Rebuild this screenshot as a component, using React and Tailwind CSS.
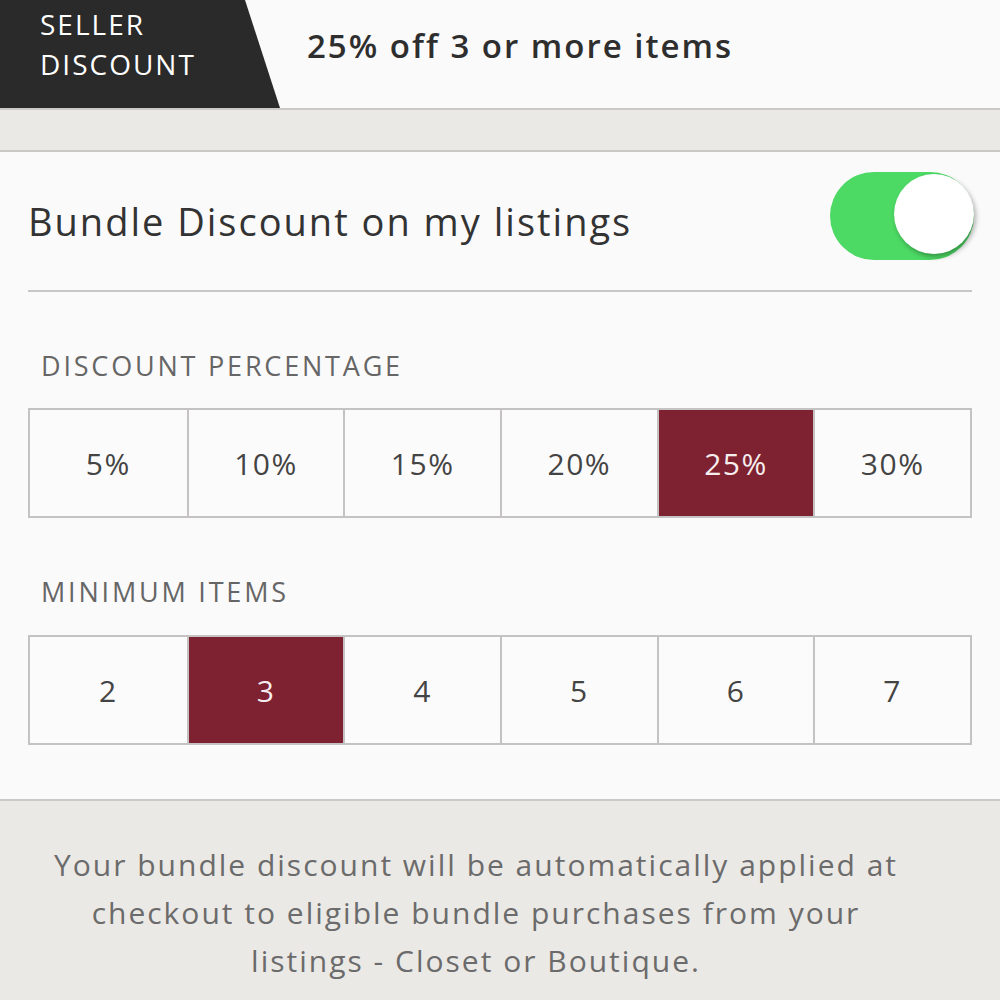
import { useState } from "react";

const PERCENTS = ["5%", "10%", "15%", "20%", "25%", "30%"];
const ITEMS = ["2", "3", "4", "5", "6", "7"];

const Segments = ({ options, value, onChange }) => (
  <div className="mx-[28px] grid grid-cols-6 border-2 border-[#c4c2c2] bg-[#fcfbfb]">
    {options.map((opt, i) => (
      <button
        key={opt}
        onClick={() => onChange(opt)}
        className={`h-[106px] flex items-center justify-center text-[30px] tracking-[1.5px] ${
          i > 0 ? "border-l-2 border-[#c4c2c2]" : ""
        } ${value === opt ? "bg-[#7e2130] text-[#f6eeee]" : "text-[#444]"}`}
      >
        {opt}
      </button>
    ))}
  </div>
);

export default function App() {
  const [enabled, setEnabled] = useState(true);
  const [percent, setPercent] = useState("25%");
  const [minItems, setMinItems] = useState("3");

  return (
    <div className="w-[1000px] h-[1000px] overflow-hidden bg-[#ebe9e6] font-['Open_Sans','Liberation_Sans',sans-serif]">
      {/* Top banner */}
      <header className="h-[110px] flex bg-[#fbfafa] border-b-2 border-[#cbc9c5]">
        <div className="relative w-[280px] h-full">
          <svg className="absolute inset-0" width="280" height="108" viewBox="0 0 280 108">
            <polygon points="0,0 245,0 280,108 0,108" fill="#2a2a2a" />
          </svg>
          <div className="relative pl-[40px] pt-[4px] text-white text-[28px] leading-[40px] tracking-[2px]">
            <div>SELLER</div>
            <div>DISCOUNT</div>
          </div>
        </div>
        <div className="pl-[27px] pt-[24px] text-[33px] font-semibold text-[#2e2e2e] leading-[44px] tracking-[2px]">
          {percent} off {minItems} or more items
        </div>
      </header>

      <div className="h-[40px]" />

      {/* Settings card */}
      <section className="bg-[#fbfafa] border-t-2 border-b-2 border-[#cbc9c5] pb-[54px]">
        <div className="mx-[28px] h-[140px] flex items-center justify-between border-b-2 border-[#c8c6c6]">
          <span className="text-[38px] text-[#333] leading-[48px] tracking-[2px]">Bundle Discount on my listings</span>
          <button
            onClick={() => setEnabled(!enabled)}
            className={`relative w-[144px] h-[88px] -mt-[10px] mr-[-2px] rounded-full ${
              enabled ? "bg-[#4cd964]" : "bg-[#e5e5e5]"
            }`}
          >
            <span
              className={`absolute top-[2px] w-[80px] h-[80px] rounded-full bg-white shadow-[2px_3px_5px_rgba(0,0,0,0.3)] ${
                enabled ? "right-0" : "left-[2px]"
              }`}
            />
          </button>
        </div>

        <div className="pl-[41px] pt-[54px] pb-[22px] text-[27px] text-[#666] leading-[40px] tracking-[2.8px]">
          DISCOUNT PERCENTAGE
        </div>
        <Segments options={PERCENTS} value={percent} onChange={setPercent} />

        <div className="pl-[41px] pt-[54px] pb-[23px] text-[27px] text-[#666] leading-[40px] tracking-[2.8px]">
          MINIMUM ITEMS
        </div>
        <Segments options={ITEMS} value={minItems} onChange={setMinItems} />
      </section>

      <p className="pl-[41px] pr-[89px] pt-[40px] text-center text-[30px] leading-[48px] text-[#6b6b6b] tracking-[2px]">
        Your bundle discount will be automatically applied at checkout to eligible bundle purchases from your
        listings - Closet or Boutique.
      </p>
    </div>
  );
}
